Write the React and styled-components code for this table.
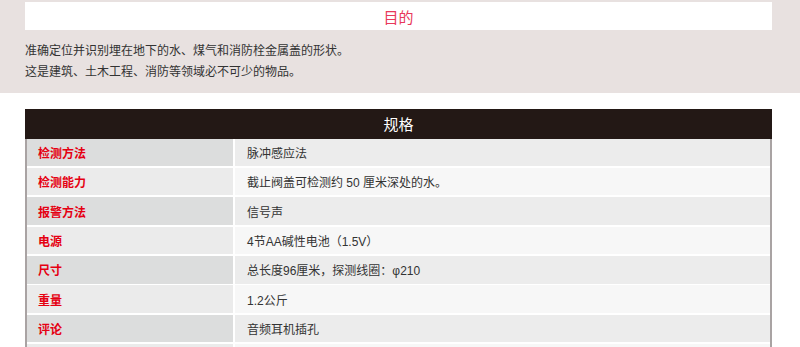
import React from "react";
import styled, { createGlobalStyle } from "styled-components";

const Global = createGlobalStyle`
  html, body { margin: 0; padding: 0; background: #ffffff; }
  body { font-family: "Liberation Sans", "Noto Sans CJK SC", sans-serif; font-size: 12px; color: #333333; }
`;

const Page = styled.div`
  width: 800px;
  height: 347px;
  overflow: hidden;
`;

const PurposeSection = styled.section`
  background: #e8e1e0;
  padding: 2px 28px 11px 25px;
`;

const TitleBox = styled.div`
  background: #ffffff;
  height: 28px;
  display: flex;
  align-items: center;
  justify-content: center;
  font-size: 15px;
  color: #e8385a;
  font-family: "Noto Sans CJK SC", sans-serif;
`;

const Paragraph = styled.p`
  margin: 11px 0 0;
  line-height: 20.5px;
  font-size: 12px;
  color: #333333;
`;

const SpecSection = styled.section`
  padding: 16px 28px 0 25px;
`;

const SpecHeader = styled.div`
  background: #231815;
  color: #ffffff;
  height: 29.5px;
  display: flex;
  align-items: center;
  justify-content: center;
  font-size: 15px;
  font-family: "Noto Sans CJK SC", sans-serif;
`;

const SpecGrid = styled.div`
  display: grid;
  grid-template-columns: 206px 1fr;
  column-gap: 2px;
  row-gap: 1.8px;
  border-left: 2px solid #a9a3a3;
  border-right: 2px solid #a9a3a3;
  background: #ffffff;
`;

const LabelCell = styled.div`
  height: 27.6px;
  display: flex;
  align-items: center;
  padding-left: 11px;
  background: ${(p) => (p.$odd ? "#dcdddd" : "#ebebeb")};
  color: #e50012;
  font-weight: bold;
  font-size: 12px;
`;

const ValueCell = styled.div`
  height: 27.6px;
  display: flex;
  align-items: center;
  padding-left: 12px;
  background: ${(p) => (p.$odd ? "#ececec" : "#f7f7f7")};
  color: #333333;
  font-size: 12px;
`;

const specs = [
  ["检测方法", "脉冲感应法"],
  ["检测能力", "截止阀盖可检测约 50 厘米深处的水。"],
  ["报警方法", "信号声"],
  ["电源", "4节AA碱性电池（1.5V）"],
  ["尺寸", "总长度96厘米，探测线圈：φ210"],
  ["重量", "1.2公斤"],
  ["评论", "音频耳机插孔"],
  ["", ""],
];

export default function App() {
  return (
    <Page>
      <Global />
      <PurposeSection>
        <TitleBox>目的</TitleBox>
        <Paragraph>
          准确定位并识别埋在地下的水、煤气和消防栓金属盖的形状。
          <br />
          这是建筑、土木工程、消防等领域必不可少的物品。
        </Paragraph>
      </PurposeSection>
      <SpecSection>
        <SpecHeader>规格</SpecHeader>
        <SpecGrid>
          {specs.map(([label, value], i) => (
            <React.Fragment key={i}>
              <LabelCell $odd={i % 2 === 0}>{label}</LabelCell>
              <ValueCell $odd={i % 2 === 0}>{value}</ValueCell>
            </React.Fragment>
          ))}
        </SpecGrid>
      </SpecSection>
    </Page>
  );
}
